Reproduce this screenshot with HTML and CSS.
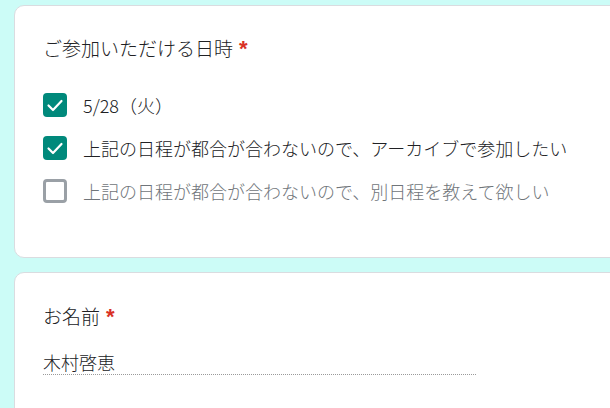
FILE: index.html
```html
<!DOCTYPE html>
<html lang="ja">
<head>
    <meta charset="UTF-8">
    <meta name="viewport" content="width=device-width, initial-scale=1.0">
    <title>参加申込</title>
    <link rel="stylesheet" href="styles.css">
</head>
<body>
    <div class="card card-date">
        <div class="question">ご参加いただける日時<span class="req">*</span></div>
        <div class="options">
            <label class="option">
                <span class="box checked">
                    <svg viewBox="0 0 24 24" width="24" height="24"><path d="M5.5 12.5 L10 17 L18.5 8" fill="none" stroke="#fff" stroke-width="2.2" stroke-linecap="round" stroke-linejoin="round"/></svg>
                </span>
                <span class="text">5/28（火）</span>
            </label>
            <label class="option">
                <span class="box checked">
                    <svg viewBox="0 0 24 24" width="24" height="24"><path d="M5.5 12.5 L10 17 L18.5 8" fill="none" stroke="#fff" stroke-width="2.2" stroke-linecap="round" stroke-linejoin="round"/></svg>
                </span>
                <span class="text">上記の日程が都合が合わないので、アーカイブで参加したい</span>
            </label>
            <label class="option disabled">
                <span class="box"></span>
                <span class="text">上記の日程が都合が合わないので、別日程を教えて欲しい</span>
            </label>
        </div>
    </div>
    <div class="card card-name">
        <div class="question">お名前<span class="req">*</span></div>
        <div class="answer">木村啓恵</div>
    </div>
</body>
</html>
```

FILE: styles.css
```css
html, body {
    height: 408px;
    overflow: hidden;
}
body {
    margin: 0;
    padding: 5px 0 0 14px;
    background-color: #ccfcf7;
    font-family: "Noto Sans CJK JP", "Noto Sans", sans-serif;
    font-weight: 300;
    color: #202124;
    box-sizing: border-box;
}
.card {
    width: 640px;
    background: #fff;
    border: 1px solid #dadce0;
    border-radius: 10px;
    padding: 0 0 0 28px;
    box-sizing: border-box;
}
.card-date {
    padding-top: 30px;
    padding-bottom: 54px;
    margin-bottom: 14px;
}
.card-name {
    padding-top: 31px;
    height: 160px;
}
.question {
    font-size: 19px;
    line-height: 24px;
    height: 24px;
}
.req {
    color: #d93025;
    margin-left: 6px;
    font-size: 22px;
    line-height: 0;
    font-weight: 700;
    font-family: "Liberation Sans", sans-serif;
}
.options {
    margin-top: 33px;
    display: flex;
    flex-direction: column;
    gap: 19px;
}
.option {
    display: flex;
    align-items: center;
    height: 24px;
}
.box {
    width: 24px;
    height: 24px;
    box-sizing: border-box;
    border: 3px solid #9aa0a6;
    border-radius: 4px;
    background: #fff;
    flex-shrink: 0;
    display: flex;
}
.box.checked {
    background: #00897b;
    border: none;
}
.text {
    margin-left: 16px;
    font-size: 18px;
    line-height: 24px;
}
.disabled .text {
    color: #70757a;
}
.answer {
    margin-top: 22px;
    width: 433px;
    font-size: 18px;
    line-height: 24px;
    border-bottom: 1px dotted #9a9a9a;
}
```
